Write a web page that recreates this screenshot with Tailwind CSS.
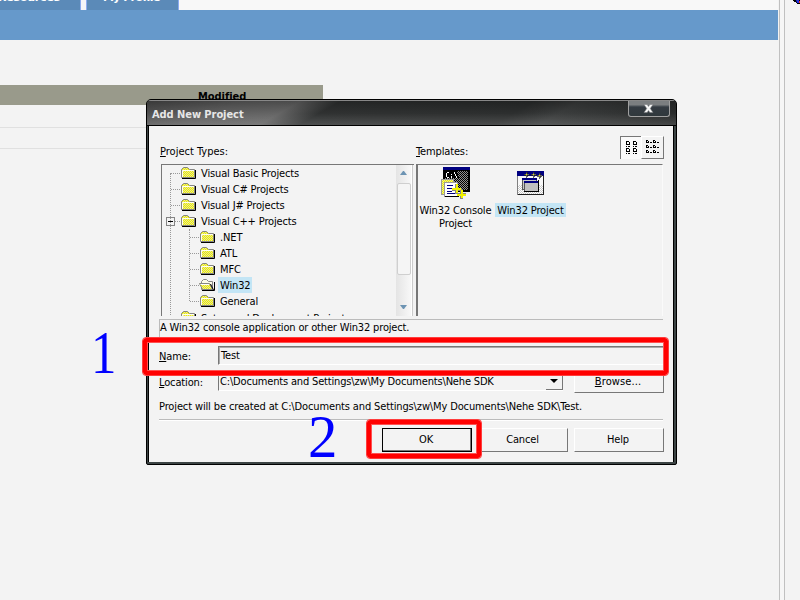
<!DOCTYPE html>
<html lang="en">
<head>
<meta charset="utf-8">
<title>Add New Project</title>
<script src="https://cdn.jsdelivr.net/npm/@tailwindcss/browser@4"></script>
</head>
<body class="relative w-[800px] h-[600px] overflow-hidden bg-[#f3f3f3] text-black text-[11px] leading-4 tracking-[-0.14px] whitespace-nowrap font-['DejaVu_Sans_Condensed','DejaVu_Sans',sans-serif]">

<svg class="absolute w-0 h-0">
  <defs>
    <pattern id="chk" width="2" height="2" patternUnits="userSpaceOnUse"><rect width="2" height="2" fill="#eeee00"/><path d="M0 0h1v1H0zM1 1h1v1H1z" fill="#e6e69c"/></pattern>
    <pattern id="dark" width="2" height="2" patternUnits="userSpaceOnUse"><rect width="2" height="2" fill="#909090"/><path d="M0 0h1v1H0zM1 1h1v1H1z" fill="#000"/></pattern>
    <pattern id="pale" width="2" height="2" patternUnits="userSpaceOnUse"><rect width="2" height="2" fill="#fff"/><path d="M0 0h1v1H0zM1 1h1v1H1z" fill="#c8c8c8"/></pattern>
    <symbol id="folder" viewBox="0 0 16 14"><path d="M1.500 11.500V3.500L3.500 1.500H7.500L9.500 3.500H14.500V11.500Z" fill="url(#chk)" stroke="#858585"/><path d="M2.500 11V4.500H14" fill="none" stroke="#fffff0"/><path d="M2 12.500H15.500V4" fill="none" stroke="#000"/></symbol>
    <symbol id="open" viewBox="0 0 16 14"><path d="M2.500 11.500V3.500L4.500 1.500H7.500L9.500 3.500H13.500V11.500Z" fill="#fafae8" stroke="#858585"/><path d="M.5 5.500H10.500L13.500 11.500H3.500Z" fill="url(#chk)" stroke="#858585"/><path d="M1.500 6.500H10" stroke="#fff"/><path d="M3 12.500H15.500V4" fill="none" stroke="#000"/><path d="M11.500 6L14.500 12" stroke="#000" fill="none"/></symbol>
  </defs>
</svg>

<!-- page behind the dialog -->
<div class="flex h-full">
  <div class="w-[778px] shrink-0">
    <div class="flex h-[10px] bg-[#f8f8f8] text-white font-bold text-[11px] font-['DejaVu_Sans',sans-serif]">
      <div class="w-[81px] h-[10px] overflow-hidden bg-[#5b8ab8] border-r border-[#8aaaf0]"><span class="block -mt-[10px] -ml-[2px] tracking-[-0.2px]">Resources</span></div>
      <div class="w-[5px] bg-[#f4f4f8]"></div>
      <div class="w-[93px] h-[10px] overflow-hidden bg-[#5b8ab8] border-x border-[#8aaaf0]"><span class="block -mt-[10px] ml-[16px] tracking-[-0.6px]">My Profile</span></div>
    </div>
    <div class="h-[30px] bg-[#6699cb]"></div>
    <div class="mt-[45px] h-5 w-[323px] bg-[#999a8b] pl-[198px] pt-[4px] font-bold"><span class="tracking-[-0.05px]">Modified</span></div>
    <div class="mt-[22px] h-px w-[147px] bg-[#e0e0e0]"></div>
    <div class="mt-5 h-px w-[147px] bg-[#e0e0e0]"></div>
  </div>
  <div class="w-[6px] shrink-0 ml-px border-x border-[#c0c0c0] bg-[#f6f6f6]"></div>
  <div class="flex-1">
    <svg class="ml-[7px]" width="9" height="5"><path d="M1 0h8v4H5V3H4V2H2V1H1z" fill="#000"/><path d="M4 0h3v3H5z" fill="#2030e0"/><path d="M7 1h2v2H7z" fill="#f03030"/></svg>
  </div>
</div>

<!-- dialog -->
<div class="absolute left-[146px] top-[99px] w-[531px] h-[366px] rounded-t-[5px] rounded-b-[2px] border border-black bg-[#3c4444] overflow-hidden">
  <div class="h-[26px] border-b border-black border-t border-t-[#888] bg-[linear-gradient(150deg,#4c4c4c_0%,#606060_16%,#646464_27%,#2f3131_34%,#2c2e2e_68%,#3b3d3d_76%,#252727_100%)]">
    <div class="flex justify-between h-full bg-linear-to-b from-black/25 via-transparent to-white/15 pl-[5px] pr-[6px]">
      <span class="pt-[6px] text-[#e6e6e6] font-bold text-[11px] tracking-[-0.06px]">Add New Project</span>
      <div class="w-[42px] h-[16px] rounded-b-[3px] border border-t-0 border-[#a0a0a0] bg-linear-to-b from-[#7b7e80] from-25% via-[#343b42] via-40% to-[#30383c] flex justify-center items-center pr-[2px]">
        <svg class="-mt-px" width="11" height="9" viewBox="0 0 12 10"><path d="M1 .5h3.500L6 2.700 7.500.5H11L8 5l3 4.500H7.500L6 7.300 4.500 9.500H1L4 5z" fill="#f6f6f6" stroke="#75777a" stroke-width=".6"/></svg>
      </div>
    </div>
  </div>
  <div class="mr-[2px] h-[336px] border-x border-black bg-[#f3f3f3] ml-px pl-[10px] pr-[9px]">
    <!-- labels and view toggles -->
    <div class="flex h-[38px] pt-[10px]">
      <div class="w-[257px] pt-[8px] pl-px"><span class="tracking-[0px]"><u class="underline-offset-1">P</u>roject Types:</span></div>
      <div class="w-[204px] pt-[8px]"><span><u class="underline-offset-1">T</u>emplates:</span></div>
      <div class="w-[21px] h-[23px] border-t border-l border-[#777] bg-[#fafafa] pl-1 pt-1">
        <svg width="14" height="15" fill="#000" shape-rendering="crispEdges"><path d="M1 0h3v1H1zM1 0h1v4H1zM1 3h4v1H1zM4 1h1v3H4zM1 5h1v1H1zM3 5h2v1H3zM8 0h3v1H8zM8 0h1v4H8zM8 3h4v1H8zM11 1h1v3h-1zM8 5h1v1H8zM10 5h2v1h-2z"/><path transform="translate(0 7)" d="M1 0h3v1H1zM1 0h1v4H1zM1 3h4v1H1zM4 1h1v3H4zM1 5h1v1H1zM3 5h2v1H3zM8 0h3v1H8zM8 0h1v4H8zM8 3h4v1H8zM11 1h1v3h-1zM8 5h1v1H8zM10 5h2v1h-2z"/></svg>
      </div>
      <div class="w-[23px] h-[23px] border-t border-l border-r border-b border-t-white border-l-white border-r-[#777] border-b-[#777] pl-[3px] pt-[3px]">
        <svg width="15" height="15" fill="#000" shape-rendering="crispEdges"><path d="M1 0h2v1H1zM1 1h1v2H1zM3 1h1v2H3zM1 2h3v1H1zM5 2h2v1H5zM8 0h2v1H8zM8 1h1v2H8zM10 1h1v2h-1zM8 2h3v1H8zM12 2h2v1h-2z"/><path transform="translate(0 5)" d="M1 0h2v1H1zM1 1h1v2H1zM3 1h1v2H3zM1 2h3v1H1zM5 2h2v1H5zM8 0h2v1H8zM8 1h1v2H8zM10 1h1v2h-1zM8 2h3v1H8zM12 2h2v1h-2z"/><path transform="translate(0 10)" d="M1 0h2v1H1zM1 1h1v2H1zM3 1h1v2H3zM1 2h3v1H1zM5 2h2v1H5zM8 0h2v1H8zM8 1h1v2H8zM10 1h1v2h-1zM8 2h3v1H8zM12 2h2v1h-2z"/></svg>
      </div>
    </div>
    <!-- project type tree and template list -->
    <div class="flex h-[152px]">
      <div class="w-[253px] ml-[2px] h-[152px] border-t border-l border-[#777] flex overflow-hidden">
        <div class="w-[234px] overflow-hidden relative">
          <div class="absolute left-[8px] top-2 h-36 border-l border-dotted border-[#999]"></div>
          <div class="absolute left-[27px] top-16 h-[72px] border-l border-dotted border-[#999]"></div>
          <div class="h-4 flex items-center pl-[9px]"><i class="w-[9px] border-t border-dotted border-[#999]"></i><svg class="mr-[5px]" width="16" height="14"><use href="#folder"/></svg><span class="pt-px">Visual Basic Projects</span></div>
          <div class="h-4 flex items-center pl-[9px]"><i class="w-[9px] border-t border-dotted border-[#999]"></i><svg class="mr-[5px]" width="16" height="14"><use href="#folder"/></svg><span class="pt-px">Visual C# Projects</span></div>
          <div class="h-4 flex items-center pl-[9px]"><i class="w-[9px] border-t border-dotted border-[#999]"></i><svg class="mr-[5px]" width="16" height="14"><use href="#folder"/></svg><span class="pt-px">Visual J# Projects</span></div>
          <div class="h-4 flex items-center pl-[4px]"><svg width="9" height="9" shape-rendering="crispEdges"><path d="M.5.5h8v8h-8z" fill="#f3f3f3" stroke="#848484"/><path d="M2 4.500h5" stroke="#000"/></svg><i class="w-[5px] border-t border-dotted border-[#999]"></i><svg class="mr-[5px]" width="16" height="14"><use href="#folder"/></svg><span class="pt-px">Visual C++ Projects</span></div>
          <div class="h-4 flex items-center pl-[28px]"><i class="w-[9px] border-t border-dotted border-[#999]"></i><svg class="mr-[5px]" width="16" height="14"><use href="#folder"/></svg><span class="pt-px">.NET</span></div>
          <div class="h-4 flex items-center pl-[28px]"><i class="w-[9px] border-t border-dotted border-[#999]"></i><svg class="mr-[5px]" width="16" height="14"><use href="#folder"/></svg><span class="pt-px">ATL</span></div>
          <div class="h-4 flex items-center pl-[28px]"><i class="w-[9px] border-t border-dotted border-[#999]"></i><svg class="mr-[5px]" width="16" height="14"><use href="#folder"/></svg><span class="pt-px">MFC</span></div>
          <div class="h-4 flex items-center pl-[28px]"><i class="w-[9px] border-t border-dotted border-[#999]"></i><svg class="mr-[3px]" width="16" height="14"><use href="#open"/></svg><span class="h-4 pt-px bg-[#c3e5f5] px-[2px]">Win32</span></div>
          <div class="h-4 flex items-center pl-[28px]"><i class="w-[9px] border-t border-dotted border-[#999]"></i><svg class="mr-[5px]" width="16" height="14"><use href="#folder"/></svg><span class="pt-px">General</span></div>
          <div class="h-4 flex items-center pl-[9px]"><i class="w-[9px] border-t border-dotted border-[#999]"></i><svg class="mr-[5px]" width="16" height="14"><use href="#folder"/></svg><span class="tracking-[-0.25px] pt-[3px]">Setup and Deployment Projects</span></div>
        </div>
        <div class="w-[15px] bg-linear-to-r from-[#e4e4e4] to-[#f8f8f8] flex flex-col items-center">
          <svg class="mt-[6px]" width="7" height="4"><path d="M3 0h1l3 4H0z" fill="#6d94b3"/></svg>
          <div class="mt-[8px] w-[14px] h-[92px] rounded-[2px] border border-[#cfcfcf] bg-[#f5f5f5]"></div>
          <svg class="mt-[30px]" width="7" height="4"><path d="M0 0h7l-3 4H3z" fill="#6d94b3"/></svg>
        </div>
        <div class="w-[2px] border-r border-[#ccc] bg-white"></div>
      </div>
      <div class="w-[247px] ml-[2px] h-[152px] border-t border-l-2 border-r border-r-[#fafafa] border-t-[#777] border-l-[#777] flex pt-[2px] leading-[13px] text-center">
        <div class="w-[75px] flex flex-col items-center">
          <svg class="-ml-[2px]" width="32" height="34" viewBox="0 0 32 34" shape-rendering="crispEdges">
            <path d="M4 1h27v24H4z" fill="#000"/><path d="M4 0h27v3H4z" fill="#000080"/><path d="M5 4h24v19H5z" fill="url(#dark)"/>
            <path d="M5 4h13l2 7H5z" fill="#000"/><path d="M7.500 6v4M8 5.500h2M8 10.500h2M12.500 7v1M12.500 9v2" stroke="#fff" fill="none"/><path d="M15 5l3 6" stroke="#fff" fill="none"/>
            <path d="M2.500 12.500h12v15h-12z" fill="url(#chk)" stroke="#999"/><path d="M5.500 15.500h13v14h-13z" fill="#fff" stroke="#999"/>
            <path d="M8 18.500h6M8 21.500h7M8 24.500h5M8 26.500h8" stroke="#000080"/><path d="M6 29.500h14" stroke="#000"/>
            <path d="M17.500 17v10M13 22h9M22.500 22v10M18 27.500h9" stroke="#888" stroke-width="3"/><path d="M17 17h2v9h-2zM13 21h9v2h-9zM22 23h2v8h-2zM18 27h9v2h-9z" fill="#f2f200"/>
          </svg>
          <span class="mt-[3px]">Win32 Console<br>Project</span>
        </div>
        <div class="w-[75px] flex flex-col items-center">
          <svg width="32" height="34" viewBox="0 0 32 34" shape-rendering="crispEdges">
            <path d="M2.500 4.500h26v23h-26z" fill="#f8f8f8" stroke="#808080"/><path d="M3 18h25v9H3z" fill="url(#pale)"/><path d="M2 4h27v5H2z" fill="#000080"/><path d="M3 27.500h26" stroke="#222"/><path d="M28.500 9v19" stroke="#222"/>
            <path d="M7.500 12.500h14v10h-14z" fill="#c8c8c8" stroke="#555"/><path d="M7 11h15v2H7z" fill="#000080"/>
            <path d="M9.500 15.500h14v9h-14z" fill="#c0c0c0" stroke="#555"/><path d="M9 14h15v2H9z" fill="#000080"/><path d="M23.500 13v12M9 24.500h15" stroke="#000"/>
            <path d="M11 5h1v2h2v1h-2v2h-1V8H9V7h2zM18 5h1v2h2v1h-2v2h-1V8h-2V7h2zM24 6h1v2h2v1h-2v2h-1V9h-2V8h2z" fill="#fff" stroke="#222" stroke-width=".7"/><path d="M11 7h1v1h-1zM18 7h1v1h-1zM24 8h1v1h-1z" fill="#e8e800"/>
          </svg>
          <span class="mt-[2px] h-[14px] pt-px bg-[#c3e5f5] px-[2px]">Win32 Project</span>
        </div>
      </div>
    </div>
    <!-- description -->
    <div class="mt-[3px] h-[19px] w-[504px] border-t border-l border-[#bbb]"><span class="tracking-[-0.16px]">A Win32 console application or other Win32 project.</span></div>
    <!-- name and location -->
    <div class="mt-[8px] flex h-[19px]"><div class="w-[59px] pt-[3px]"><u class="underline-offset-1">N</u>ame:</div><div class="w-[446px] border-t border-l border-[#777] border-b border-b-white pl-[2px] pt-px shadow-[inset_1px_1px_#aaa]">Test</div></div>
    <div class="mt-[7px] flex h-[22px]"><div class="w-[59px] pt-[3px]"><u class="underline-offset-1">L</u>ocation:</div>
      <div class="w-[345px] h-[19px] border-t border-l border-[#777] border-b border-b-white pl-[1px] flex justify-between"><span class="pt-px tracking-[-0.17px]">C:\Documents and Settings\zw\My Documents\Nehe SDK</span>
        <div class="w-[17px] h-[17px] border-r border-b border-[#777] flex items-center justify-center"><svg width="8" height="4"><path d="M0 0h8L4 4z"/></svg></div></div>
      <div class="w-[90px] h-[21px] ml-[11px] border-r border-b border-l border-l-white border-[#777] text-center pt-[2px] pr-[2px] tracking-[0.1px]"><u class="underline-offset-1">B</u>rowse...</div>
    </div>
    <div class="mt-[3px] h-[22px] pt-[2px]"><span class="tracking-[-0.13px]">Project will be created at C:\Documents and Settings\zw\My Documents\Nehe SDK\Test.</span></div>
    <div class="w-[504px] border-t border-[#bbb] border-b border-b-white"></div>
    <!-- actions -->
    <div class="mt-[7px] flex ml-[223px] h-6 text-center leading-[22px]">
      <div class="w-[90px] border border-black shadow-[inset_-1px_-1px_#777] pr-[2px]">OK</div>
      <div class="w-[91px] ml-[5px] border-t border-l border-white border-r border-b border-r-[#777] border-b-[#777]">Cancel</div>
      <div class="w-[90px] ml-[6px] border-t border-l border-white border-r border-b border-r-[#777] border-b-[#777] pr-[2px]">Help</div>
    </div>
  </div>
</div>

<!-- annotations -->
<div class="absolute left-[143px] top-[338px] w-[525px] h-[37px] rounded-[3px] border-[4px] border-[#ff0000] outline outline-[#ff3c3c] shadow-[inset_0_0_0_1px_#ff5050]"></div>
<div class="absolute left-[367px] top-[420px] w-[114px] h-[38px] rounded-[3px] border-[4px] border-[#ff0000] outline outline-[#ff3c3c] shadow-[inset_0_0_0_1px_#ff5050]"></div>
<div class="absolute left-[91px] top-[323px] origin-left scale-x-[.82] text-[62px] leading-[58px] text-[#0000ff] font-['Liberation_Serif',serif]">1</div>
<div class="absolute left-[308px] top-[407px] origin-left scale-x-[.95] text-[62px] leading-[58px] text-[#0000ff] font-['Liberation_Serif',serif]">2</div>
</body>
</html>
